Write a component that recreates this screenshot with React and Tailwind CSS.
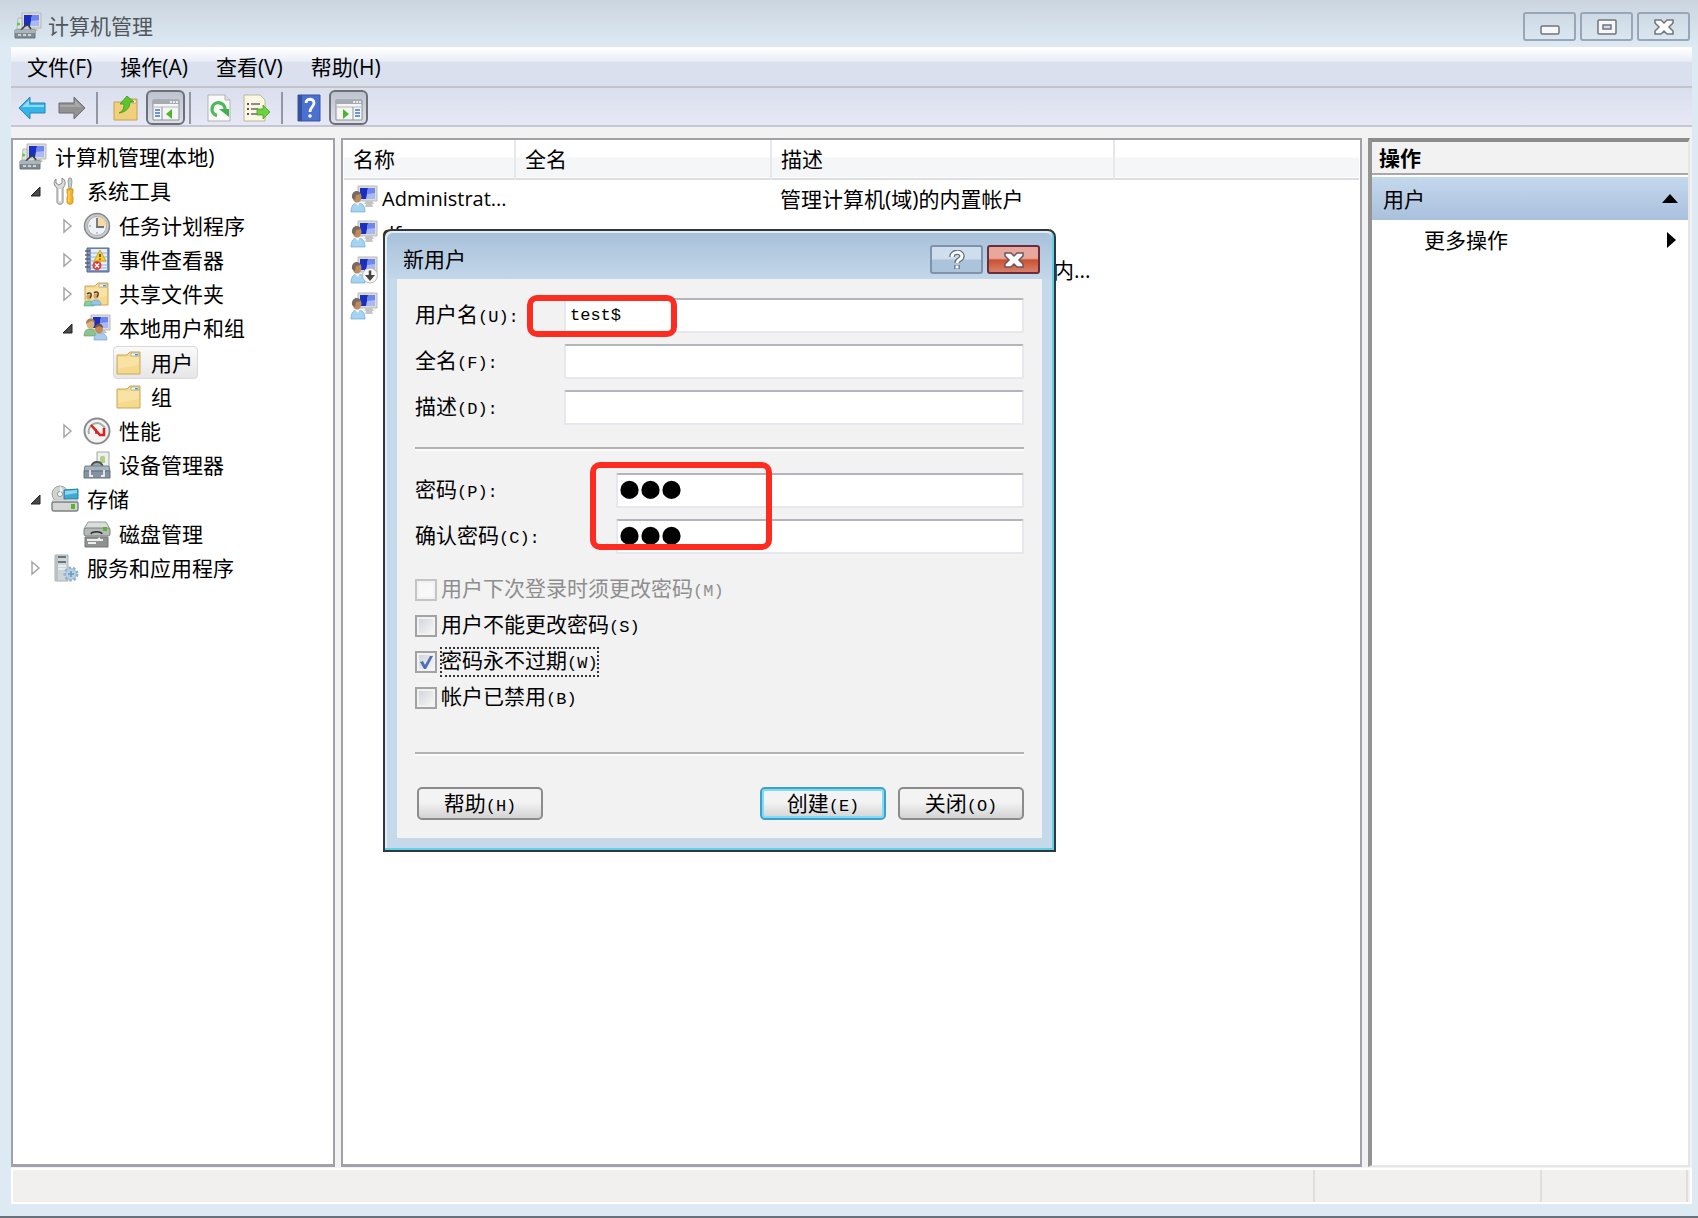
import { useState } from "react";

const MENUS = ["文件(F)", "操作(A)", "查看(V)", "帮助(H)"];

const TREE = [
  { id: "root", level: 0, label: "计算机管理(本地)", Icon: ComputerIcon },
  { id: "system", level: 1, label: "系统工具", Icon: ToolsIcon, state: "open" },
  { id: "tasks", level: 2, label: "任务计划程序", Icon: ClockIcon, state: "closed" },
  { id: "events", level: 2, label: "事件查看器", Icon: EventIcon, state: "closed" },
  { id: "shares", level: 2, label: "共享文件夹", Icon: SharedIcon, state: "closed" },
  { id: "local", level: 2, label: "本地用户和组", Icon: GroupIcon, state: "open" },
  { id: "users", level: 3, label: "用户", Icon: FolderIcon },
  { id: "groups", level: 3, label: "组", Icon: FolderIcon },
  { id: "perf", level: 2, label: "性能", Icon: PerfIcon, state: "closed" },
  { id: "devices", level: 2, label: "设备管理器", Icon: DeviceIcon },
  { id: "storage", level: 1, label: "存储", Icon: StorageIcon, state: "open" },
  { id: "disks", level: 2, label: "磁盘管理", Icon: DiskIcon },
  { id: "services", level: 1, label: "服务和应用程序", Icon: ServicesIcon, state: "closed" },
];

const INDENT = ["pl-1", "pl-4", "pl-12", "pl-20"];

const USERS = [
  { name: "Administrat...", desc: "管理计算机(域)的内置帐户" },
  { name: "df", desc: "" },
  { name: "Guest", desc: "供来宾访问计算机或访问域的内...", disabled: true },
  { name: "", desc: "" },
];

const OPTIONS = [
  { id: "mustChange", label: "用户下次登录时须更改密码", hotkey: "(M)", disabled: true },
  { id: "cannotChange", label: "用户不能更改密码", hotkey: "(S)" },
  { id: "neverExpires", label: "密码永不过期", hotkey: "(W)", focused: true },
  { id: "accountDisabled", label: "帐户已禁用", hotkey: "(B)" },
];

/* ---------- icons ---------- */

function Monitor() {
  return (
    <>
      <path d="M8 1h19v15H8z" fill="#dcdcd8" stroke="#b9b9b5" />
      <path d="M10 3h15v11H10z" fill="#a9b9f8" />
      <path d="M10 3h8l-2 11h-6z" fill="#1a2fc0" />
      <path d="M18 3h7v5l-8 1z" fill="#6f85ef" />
      <path d="M16 16h6l2 3h-10z" fill="#c3c4c2" />
    </>
  );
}

function ComputerIcon() {
  return (
    <svg viewBox="0 0 28 28" className="size-7 shrink-0">
      <Monitor />
      <path d="M4 6h4v11H3z" fill="#dfe3e3" stroke="#a8adad" strokeWidth=".8" />
      <circle cx="4.500" cy="12" r="1.600" fill="#55d03a" />
      <path d="M7 18l4-4 3-1 3 4" fill="none" stroke="#3a4043" strokeWidth="1.600" />
      <path d="M1 18h20v8H1z" fill="#7f8b91" stroke="#6a757b" />
      <path d="M1 18h20v3H1z" fill="#aab5ba" />
      <path d="M4 23h3M9 23h3M14 23h3" stroke="#e6ecef" strokeWidth="1.600" />
    </svg>
  );
}

function ToolsIcon() {
  return (
    <svg viewBox="0 0 28 28" className="size-7 shrink-0">
      <path d="M5 2v4l3 2 3-2V1c4 2 4 7 1 10v14c0 3-6 3-6 0V11C3 9 2 5 5 2z" fill="#dadada" stroke="#8a8a8a" />
      <path d="M9 12v12" stroke="#fff" strokeWidth="2" />
      <path d="M18 1h2l1 3-1 8h-2l-1-8z" fill="#c9cdd0" stroke="#8a8e91" strokeWidth=".8" />
      <path d="M16 12h6v4l-1 2 1 2v5c0 3-6 3-6 0v-5l1-2-1-2z" fill="#f6b41f" stroke="#c98a10" strokeWidth=".8" />
      <path d="M18 14v11" stroke="#ffe08a" />
    </svg>
  );
}

function ClockIcon() {
  return (
    <svg viewBox="0 0 28 28" className="size-7 shrink-0">
      <circle cx="14" cy="14" r="12.500" fill="#c9cccd" stroke="#85898b" strokeWidth="1.500" />
      <circle cx="14" cy="14" r="9.500" fill="#eef2f6" stroke="#a7abad" />
      <path d="M14 14V4.500A9.500 9.500 0 0 1 23.500 14z" fill="#f7d9a4" />
      <path d="M14 6v9h7" fill="none" stroke="#6f7375" strokeWidth="1.800" />
      <path d="M6 14h2M14 20v2" stroke="#8f9395" />
    </svg>
  );
}

function EventIcon() {
  return (
    <svg viewBox="0 0 28 28" className="size-7 shrink-0">
      <path d="M4 2h22v24H4z" fill="#7e94bd" stroke="#55688f" />
      <path d="M8 3h16v21H8z" fill="#e7eefb" />
      <path d="M8 7h16M8 11h16M8 15h16M8 19h16M8 22h16" stroke="#9db0d6" />
      <path d="M2 5h5M2 9h5M2 13h5M2 17h5M2 21h5" stroke="#5c6470" strokeWidth="1.500" />
      <path d="M17 4l6 11H11z" fill="#f7cf2a" stroke="#c79a12" strokeWidth=".8" />
      <path d="M17 8v3M17 12.500v1.200" stroke="#4c3a00" strokeWidth="1.600" />
      <circle cx="14" cy="19.500" r="4.500" fill="#dc4038" />
      <path d="M12 17.500l4 4M16 17.500l-4 4" stroke="#fff" strokeWidth="1.600" />
    </svg>
  );
}

function FolderShape() {
  return (
    <>
      <path d="M2 6h10l3-3h10v22H2z" fill="#f5d98c" stroke="#c9a75a" />
      <path d="M16 4h8v3h-8z" fill="#f4f8f6" stroke="#a9a88a" strokeWidth=".8" />
      <path d="M20 5h3v1.500h-3z" fill="#4d9bd0" />
      <path d="M3 8h21v8L3 20z" fill="#fbe7ae" opacity=".7" />
    </>
  );
}

function FolderIcon() {
  return (
    <svg viewBox="0 0 28 28" className="size-7 shrink-0">
      <FolderShape />
    </svg>
  );
}

function SharedIcon() {
  return (
    <svg viewBox="0 0 28 28" className="size-7 shrink-0">
      <FolderShape />
      <path d="M1 26c0-4 3-5 5-5s5 1 5 5z" fill="#7fd0a8" stroke="#4fa37c" strokeWidth=".6" />
      <path d="M8 25c0-4 3-5 5-5s5 1 5 5z" fill="#8fc8ec" stroke="#5b97c2" strokeWidth=".6" />
      <circle cx="6" cy="17" r="2.600" fill="#d3a271" />
      <circle cx="13" cy="16" r="2.600" fill="#d3a271" />
      <path d="M4 14c2-2 5-1 4 2l-1 2M11 13c2-2 5-1 4 2l-1 2" fill="none" stroke="#4a3b2c" strokeWidth="1.400" />
    </svg>
  );
}

function GroupIcon() {
  return (
    <svg viewBox="0 0 28 28" className="size-7 shrink-0">
      <Monitor />
      <path d="M1 22c0-6 3-7 6-7s6 1 6 7z" fill="#8cc48c" stroke="#5f9a63" strokeWidth=".6" />
      <ellipse cx="7.500" cy="10" rx="4" ry="5" fill="#dcb27e" />
      <path d="M3 10c0-7 8-7 9-2l-4-1z" fill="#a5835a" />
      <path d="M11 26c0-6 3-7 6-7s7 1 7 7z" fill="#a9cbee" stroke="#6f97c4" strokeWidth=".6" />
      <ellipse cx="16" cy="15" rx="4" ry="4.500" fill="#c48a58" />
      <path d="M12 14c0-6 8-6 8 0l-4-2z" fill="#7a5638" />
    </svg>
  );
}

function UserIcon({ disabled }) {
  return (
    <svg viewBox="0 0 28 28" className="size-7 shrink-0">
      <Monitor />
      <path d="M16 19h6l1 3h-8z" fill="#c4c5c4" />
      <path d="M1 27c0-7 3-9 7-9s7 2 7 9z" fill="#a5d3f2" stroke="#6ea6cf" strokeWidth=".7" />
      <path d="M5 18l3 3 2-4z" fill="#f2f7fb" />
      <ellipse cx="7" cy="12" rx="4.500" ry="5.500" fill="#c08a5d" />
      <path d="M2 13C1 5 9 4 11 9l-5 1-1 5z" fill="#776a5e" />
      {disabled && (
        <>
          <circle cx="20" cy="19.500" r="7.500" fill="#f7f7f7" stroke="#b5b5b5" />
          <path d="M20 14.500v6" stroke="#444" strokeWidth="2.500" />
          <path d="M15 19h10l-5 6z" fill="#444" />
        </>
      )}
    </svg>
  );
}

function PerfIcon() {
  return (
    <svg viewBox="0 0 28 28" className="size-7 shrink-0">
      <circle cx="14" cy="14" r="12.500" fill="#f4f4f4" stroke="#8b8b8b" strokeWidth="2" />
      <path d="M6 17a8 8 0 0 1 16-5" fill="none" stroke="#9fb3aa" strokeWidth="2" />
      <path d="M8 8l9 10h4v-7" fill="none" stroke="#e01f1f" strokeWidth="2.600" />
      <path d="M13 17v-5" stroke="#e01f1f" strokeWidth="1.600" />
    </svg>
  );
}

function DeviceIcon() {
  return (
    <svg viewBox="0 0 28 28" className="size-7 shrink-0">
      <path d="M14 1h12v16H14z" fill="#eef0ec" stroke="#a3a6a3" />
      <path d="M17 12V7c0-3 5-3 5 0v5z" fill="#b3cf86" />
      <path d="M8 16c1-4 3-5 6-5s5 1 6 5" fill="#9aa7b2" stroke="#4c5356" strokeWidth="1.800" />
      <path d="M2 15h24l1 5H1z" fill="#a7b4bf" stroke="#75828d" />
      <path d="M1 20h26v7H1z" fill="#8393a1" stroke="#66737e" />
      <path d="M7 19v6h3M21 19v6h-3" fill="none" stroke="#e7edf1" strokeWidth="1.800" />
    </svg>
  );
}

function StorageIcon() {
  return (
    <svg viewBox="0 0 28 28" className="size-7 shrink-0">
      <circle cx="9" cy="9" r="8" fill="#cfd4d3" stroke="#9da2a1" />
      <circle cx="9" cy="9" r="2.500" fill="#fff" stroke="#8d9291" />
      <path d="M9 1l3 5-3 1z" fill="#f2f4f4" />
      <path d="M13 5l14-1v10H13z" fill="#3fa9d3" stroke="#2580a8" />
      <path d="M14 6l12-1v3l-12 2z" fill="#8fd6ee" />
      <path d="M2 15h24l1 3H1z" fill="#f4f5f5" stroke="#b5b8b7" strokeWidth=".8" />
      <rect x="1" y="17" width="26" height="9" rx="2" fill="#d3d6d5" stroke="#7d8180" strokeWidth="1.400" />
      <path d="M20 19h4v5h-4z" fill="#54b82a" />
    </svg>
  );
}

function DiskIcon() {
  return (
    <svg viewBox="0 0 28 28" className="size-7 shrink-0">
      <path d="M5 2h18l4 7H1z" fill="#dcdedd" stroke="#979a99" />
      <rect x="1" y="8" width="26" height="8" rx="2" fill="#b5b9b8" stroke="#7d8180" />
      <path d="M8 14c1-3 10-3 11 0" fill="none" stroke="#26303a" strokeWidth="1.600" />
      <path d="M20 7h4v4h-4z" fill="#54b82a" />
      <path d="M2 17h23v10H2z" fill="#8e9190" stroke="#737675" />
      <path d="M5 23h8M15 19l2-1M4 20h16" stroke="#eceeed" strokeWidth="1.800" />
    </svg>
  );
}

function ServicesIcon() {
  return (
    <svg viewBox="0 0 28 28" className="size-7 shrink-0">
      <path d="M4 1h13v26H4z" fill="#cdd5d8" stroke="#a5afb4" />
      <path d="M4 1h3v26H4z" fill="#b7c2c7" />
      <path d="M7 3h8M7 8h8" stroke="#4d565b" strokeWidth="1.600" />
      <path d="M7 12h8M7 15h8" stroke="#eef3f5" strokeWidth="1.500" />
      <circle cx="20" cy="20" r="6" fill="#a8c4dc" stroke="#94b2cc" strokeWidth="3" strokeDasharray="2.500 1.700" />
      <circle cx="20" cy="20" r="5" fill="#b6cfe3" />
      <path d="M20 17v6M17 20h6" stroke="#7396b6" strokeWidth="1.500" />
    </svg>
  );
}

function ArrowIcon({ forward }) {
  return (
    <svg viewBox="0 0 28 24" className="h-6 w-7">
      {forward ? (
        <>
          <path d="M27 12L16 1v6H1v10h15v6z" fill="#929292" stroke="#6c6c6c" />
          <path d="M2 9h15V4l7 7H2z" fill="#a8a8a8" />
        </>
      ) : (
        <>
          <path d="M1 12L12 1v6h15v10H12v6z" fill="#35b4ea" stroke="#2a83b5" />
          <path d="M4 11l7-7v5h15v2z" fill="#8fdcfa" />
        </>
      )}
    </svg>
  );
}

function FolderUpIcon() {
  return (
    <svg viewBox="0 0 28 28" className="size-7">
      <path d="M2 8h9l2-3h12v21H2z" fill="#f1d07c" stroke="#c8a24d" />
      <path d="M20 6h4v3h-4z" fill="#fff" stroke="#b59c5c" strokeWidth=".7" />
      <path d="M7 19c4-2 5-5 5-9H8l7-8 7 6h-4c0 6-4 10-11 11z" fill="#5fc52e" stroke="#3c941a" strokeWidth=".8" />
    </svg>
  );
}

function PaneIcon({ right }) {
  return (
    <svg viewBox="0 0 28 22" className="mt-1 h-[22px] w-7">
      <path d="M1 1h26v20H1z" fill="#f5f5f5" stroke="#8d9299" />
      <path d="M1 1h26v4H1z" fill="#a6abb3" />
      <path d="M18 3h2M21 3h2M24 3h2" stroke="#fff" strokeWidth="1.500" />
      <path d="M2 8h24" stroke="#b4b9c0" />
      {right ? (
        <>
          <path d="M18 8v13" stroke="#8d9299" />
          <path d="M20 11h5M20 14h5M20 17h5" stroke="#3c78c4" strokeWidth="1.600" />
          <path d="M8 10l6 5-6 5z" fill="#4fb52c" />
        </>
      ) : (
        <>
          <path d="M10 8v13" stroke="#8d9299" />
          <path d="M3 11h5M3 14h5M3 17h5" stroke="#3c78c4" strokeWidth="1.600" />
          <path d="M20 10l-6 5 6 5z" fill="#4fb52c" />
        </>
      )}
    </svg>
  );
}

function RefreshIcon() {
  return (
    <svg viewBox="0 0 24 28" className="h-7 w-6">
      <path d="M1 1h17l5 5v21H1z" fill="#fafafa" stroke="#b3b3b3" />
      <path d="M18 1v5h5" fill="#e2e2e2" stroke="#b3b3b3" />
      <path d="M10 21.500A6.500 6.500 0 1 1 18 15" fill="none" stroke="#4fb85c" strokeWidth="3.400" />
      <path d="M12 15h10v8z" fill="#3fb04e" />
    </svg>
  );
}

function ExportIcon() {
  return (
    <svg viewBox="0 0 28 28" className="size-7">
      <path d="M1 1h16l5 5v21H1z" fill="#fbf7e3" stroke="#bdb79c" />
      <path d="M4 10h2M4 15h2M4 20h2" stroke="#555" strokeWidth="2" />
      <path d="M8 10h9M8 15h7M8 20h7" stroke="#8d8d8d" strokeWidth="2" />
      <path d="M14 15h6v-4l7 7-7 7v-4h-6z" fill="#6fd13f" stroke="#44a01d" strokeWidth=".8" />
    </svg>
  );
}

function HelpIcon() {
  return (
    <svg viewBox="0 0 24 28" className="h-7 w-6">
      <path d="M1 1h22v26H1z" fill="#4a70d0" stroke="#3a539f" />
      <path d="M1 1h4v26H1z" fill="#35529f" />
      <path d="M9 9c0-5 8-5 8 0 0 4-4 4-4 9" fill="none" stroke="#fff" strokeWidth="2.800" />
      <circle cx="13" cy="22" r="1.800" fill="#fff" />
    </svg>
  );
}

function CloseGlyph({ stroke }) {
  return (
    <svg viewBox="0 0 20 16" className="h-4 w-5">
      <path d="M1 1h6l3 3 3-3h6v3l-4 4 4 4v3h-6l-3-3-3 3H1v-3l4-4-4-4z" fill="#fbfbfb" stroke={stroke} strokeWidth="1.500" />
    </svg>
  );
}

/* ---------- window parts ---------- */

function CaptionButton({ label, children }) {
  return (
    <button
      aria-label={label}
      className="flex h-[29px] w-[53px] items-center justify-center rounded-[3px] border-2 border-[#9aa5b8] bg-linear-to-b from-[#cdd9e4] to-[#dae6f0]"
    >
      {children}
    </button>
  );
}

function TitleBar() {
  return (
    <header className="flex h-[47px] items-center bg-linear-to-b from-[#cad5df] to-[#dde9f3] pt-1 pr-2 pl-3.5">
      <ComputerIcon />
      <h1 className="ml-1.5 flex-1 text-[#50565c]">计算机管理</h1>
      <div className="mt-0.5 flex gap-1">
        <CaptionButton label="最小化">
          <svg viewBox="0 0 20 16" className="h-4 w-5">
            <rect x="1" y="7" width="18" height="8" rx="1.500" fill="#f7f7f7" stroke="#70757e" strokeWidth="1.500" />
          </svg>
        </CaptionButton>
        <CaptionButton label="还原">
          <svg viewBox="0 0 20 16" className="h-4 w-5">
            <rect x="1" y="1" width="18" height="14" rx="1" fill="#f7f7f7" stroke="#70757e" strokeWidth="1.500" />
            <rect x="6" y="6" width="8" height="4" fill="#d4dee8" stroke="#70757e" strokeWidth="1.500" />
          </svg>
        </CaptionButton>
        <CaptionButton label="关闭">
          <CloseGlyph stroke="#70757e" />
        </CaptionButton>
      </div>
    </header>
  );
}

function ToolButton({ label, children }) {
  return (
    <button aria-label={label} className="flex h-full items-center">
      {children}
    </button>
  );
}

function ToggleButton({ label, children }) {
  return (
    <button
      aria-label={label}
      aria-pressed="true"
      className="flex h-[35px] w-[39px] items-center justify-center rounded-md border-2 border-[#6d7079] bg-linear-to-b from-[#bfc3ce] to-[#dcdfe8]"
    >
      {children}
    </button>
  );
}

function Divider() {
  return <span className="h-8 w-0.5 bg-[#9496a0]" />;
}

function Toolbar() {
  return (
    <div className="flex h-[39px] items-center border-b-2 border-[#c5c6d3] bg-linear-to-b from-[#dadfed] to-[#e7e8f5] pt-0.5 pl-[7px]">
      <div className="flex items-center gap-3">
        <ToolButton label="后退"><ArrowIcon /></ToolButton>
        <ToolButton label="前进"><ArrowIcon forward /></ToolButton>
      </div>
      <div className="ml-2.5 flex items-center">
        <Divider />
        <div className="ml-3.5 flex items-center gap-1.5">
          <ToolButton label="向上一级"><FolderUpIcon /></ToolButton>
          <ToggleButton label="显示/隐藏控制台树"><PaneIcon /></ToggleButton>
        </div>
      </div>
      <div className="ml-1 flex items-center">
        <Divider />
        <div className="ml-4 flex items-center gap-3">
          <ToolButton label="刷新"><RefreshIcon /></ToolButton>
          <ToolButton label="导出列表"><ExportIcon /></ToolButton>
        </div>
      </div>
      <div className="ml-2.5 flex items-center">
        <Divider />
        <div className="ml-3.5 flex items-center gap-2">
          <ToolButton label="帮助"><HelpIcon /></ToolButton>
          <ToggleButton label="显示/隐藏操作窗格"><PaneIcon right /></ToggleButton>
        </div>
      </div>
    </div>
  );
}

function TreeArrow({ state }) {
  if (state === "open") {
    return (
      <svg viewBox="0 0 12 12" className="size-3">
        <path d="M11 2v9H2z" fill="#4a4a4a" stroke="#222" />
      </svg>
    );
  }
  return (
    <svg viewBox="0 0 12 16" className="h-4 w-3">
      <path d="M3 2l7 6-7 6z" fill="#fff" stroke="#a6a6a6" strokeWidth="1.500" />
    </svg>
  );
}

function Tree() {
  const [selected, setSelected] = useState("users");

  return (
    <nav className="w-[324px] shrink-0 border-2 border-b-[3px] border-[#a0a1a9] bg-white">
      <ul className="flex h-[445px] flex-col">
        {TREE.map(({ id, level, label, Icon, state }) => (
          <li key={id} className={`flex flex-1 items-center ${INDENT[level]}`}>
            {level > 0 && <span className="w-5 shrink-0">{state && <TreeArrow state={state} />}</span>}
            <button
              onClick={() => setSelected(id)}
              className={`flex h-[33px] items-center gap-2 rounded border pr-1 pl-px whitespace-nowrap ${
                selected === id ? "border-[#d9d9d9] bg-linear-to-b from-[#fafafa] to-[#e6e6e6]" : "border-transparent"
              }`}
            >
              <Icon />
              {label}
            </button>
          </li>
        ))}
      </ul>
    </nav>
  );
}

function UserList() {
  return (
    <main className="min-w-0 flex-1 border-2 border-b-[3px] border-[#a0a1a9] bg-white px-px">
      <table className="w-full table-fixed border-collapse text-left whitespace-nowrap">
        <colgroup>
          <col className="w-[171px]" />
          <col className="w-[256px]" />
          <col className="w-[343px]" />
          <col />
        </colgroup>
        <thead>
          <tr className="h-[39px] border-b-2 border-[#dcdde0] bg-linear-to-b from-white from-45% to-[#f5f6f8] to-50%">
            <th className="border-r-2 border-[#e6e7ea] pl-[9px] font-normal">名称</th>
            <th className="border-r-2 border-[#e6e7ea] pl-[9px] font-normal">全名</th>
            <th className="border-r-2 border-[#e6e7ea] pl-[9px] font-normal">描述</th>
            <th />
          </tr>
        </thead>
        <tbody>
          {USERS.map((u, i) => (
            <tr key={i} className="h-9">
              <td className="pt-0.5 pl-1.5">
                <div className="flex items-center gap-1">
                  <UserIcon disabled={u.disabled} />
                  <span className="text-xl">{u.name}</span>
                </div>
              </td>
              <td />
              <td className="pt-0.5 pl-[9px]">{u.desc}</td>
              <td />
            </tr>
          ))}
        </tbody>
      </table>
    </main>
  );
}

function ActionsPane() {
  return (
    <aside className="w-[322px] shrink-0 border-t-4 border-r-2 border-b-2 border-l-4 border-t-[#8b8b8b] border-r-[#e6e6e6] border-b-[#e6e6e6] border-l-[#939393] bg-white">
      <h2 className="flex h-[33px] items-center border-b-2 border-[#a8a8a8] bg-[#f2f2f2] pl-[7px] font-bold">操作</h2>
      <button className="mt-0.5 flex h-[43px] w-full items-center justify-between bg-linear-to-b from-[#c5d9ed] to-[#a9c0dc] pr-2.5 pl-[11px]">
        用户
        <svg viewBox="0 0 16 9" className="h-[9px] w-4"><path d="M8 0l8 9H0z" /></svg>
      </button>
      <button className="flex h-[39px] w-full items-center justify-between pr-3 pl-[52px]">
        更多操作
        <svg viewBox="0 0 9 16" className="h-4 w-[9px]"><path d="M0 0l9 8-9 8z" /></svg>
      </button>
    </aside>
  );
}

/* ---------- new user dialog ---------- */

function Hotkey({ children }) {
  return <span className="font-['Liberation_Mono'] text-[17px]">{children}</span>;
}

function Field({ id, label, hotkey, wide, ...props }) {
  return (
    <div className="flex h-[35px] items-center">
      <label htmlFor={id} className={`shrink-0 ${wide ? "w-[149px]" : "w-[201px]"}`}>
        {label}
        <Hotkey>{hotkey}:</Hotkey>
      </label>
      <input
        id={id}
        className={`h-full min-w-0 flex-1 rounded-xs border-2 border-[#e6e8ee] border-t-[#b4b5bb] bg-white outline-none ${
          props.type === "password"
            ? "pl-px font-['Liberation_Serif'] text-6xl [-webkit-text-stroke:4px_black]"
            : "pl-1 font-['Liberation_Mono'] text-[17px]"
        }`}
        {...props}
      />
    </div>
  );
}

function Rule() {
  return <hr className="h-0.5 border-0 bg-[#b3b3b3] shadow-[0_2px_0_#fbfbfb]" />;
}

function DialogButton({ primary, children }) {
  return (
    <button
      className={`h-[33px] w-[126px] rounded-[5px] border-2 bg-linear-to-b from-[#f3f3f3] from-45% to-[#d6d6d6] to-95% leading-none ${
        primary ? "border-[#3f9fcb] shadow-[inset_0_0_0_2px_#7fdcf5]" : "border-[#8c8c8c]"
      }`}
    >
      {children}
    </button>
  );
}

function NewUserDialog() {
  const [form, setForm] = useState({ username: "test$", fullname: "", desc: "", pass: "123", confirm: "123" });
  const [flags, setFlags] = useState({ neverExpires: true });

  const bind = (name) => ({
    id: name,
    value: form[name],
    onChange: (e) => setForm({ ...form, [name]: e.target.value }),
  });

  return (
    <section
      role="dialog"
      aria-labelledby="dialog-title"
      className="absolute top-[229px] left-[383px] w-[673px] rounded-t-lg border-2 border-[#30383d] bg-[#c5d9eb] px-3 pb-3 shadow-[inset_-2px_-2px_0_#5fd0e6,inset_2px_2px_0_#e3edf5]"
    >
      <div className="-mx-2.5 mt-0.5 flex h-[46px] justify-between rounded-t-md bg-linear-to-b from-[#a8c1d9] to-[#c3d7ea] pr-3 pl-4">
        <h2 id="dialog-title" className="flex items-center pt-1.5">新用户</h2>
        <div className="flex gap-1 pt-3">
          <button aria-label="帮助" className="flex h-[29px] w-[53px] items-center justify-center rounded-[3px] border-2 border-[#7f93ad] bg-linear-to-b from-[#cfdeec] from-48% to-[#abc4dc] to-52%">
            <svg viewBox="0 0 16 20" className="h-5 w-4">
              <path d="M3 7c0-6 10-6 10-1 0 4-5 3-5 7M8 15v4" fill="none" stroke="#62718a" strokeWidth="5.500" />
              <path d="M3 7c0-6 10-6 10-1 0 4-5 3-5 7M8 15.500v3" fill="none" stroke="#fff" strokeWidth="3" />
            </svg>
          </button>
          <button aria-label="关闭" className="flex h-[29px] w-[53px] items-center justify-center rounded-[3px] border-2 border-[#6b2c3c] bg-linear-to-b from-[#e8a79c] from-45% via-[#c9512f] via-52% to-[#d9806a]">
            <CloseGlyph stroke="#6d5560" />
          </button>
        </div>
      </div>

      <form onSubmit={(e) => e.preventDefault()} className="relative bg-[#f2f2f2] px-[18px] pt-[19px] pb-[18px]">
        <div className="flex flex-col gap-[11px]">
          <Field {...bind("username")} label="用户名" hotkey="(U)" wide />
          <Field {...bind("fullname")} label="全名" hotkey="(F)" wide />
          <Field {...bind("desc")} label="描述" hotkey="(D)" wide />
        </div>
        <div className="mt-[22px]"><Rule /></div>

        <div className="mt-6 flex flex-col gap-[11px]">
          <Field {...bind("pass")} type="password" label="密码" hotkey="(P)" />
          <Field {...bind("confirm")} type="password" label="确认密码" hotkey="(C)" />
        </div>

        <div className="mt-[18px]">
          {OPTIONS.map((o) => (
            <label key={o.id} className={`flex h-9 items-center gap-1 ${o.disabled ? "text-[#8e8e8e]" : ""}`}>
              <span className="grid">
                <input
                  type="checkbox"
                  disabled={o.disabled}
                  checked={!!flags[o.id]}
                  onChange={(e) => setFlags({ ...flags, [o.id]: e.target.checked })}
                  className="peer col-start-1 row-start-1 size-[22px] appearance-none border-2 border-[#a3a3a3] bg-linear-to-br from-[#cdd1d7] to-[#fafafa] shadow-[inset_0_0_0_2px_#f2f2f2] disabled:border-[#c4c4c4] disabled:from-[#f6f6f6]"
                />
                <svg viewBox="0 0 22 22" className="pointer-events-none invisible col-start-1 row-start-1 size-[22px] peer-checked:visible">
                  <path d="M5 11l3-1 2 4 5-9h3l-7 13H9z" fill="#4e6db4" />
                </svg>
              </span>
              <span className={`leading-6 ${o.focused ? "outline-2 -outline-offset-1 outline-dotted outline-[#333]" : ""}`}>
                {o.label}
                <Hotkey>{o.hotkey}</Hotkey>
              </span>
            </label>
          ))}
        </div>
        <div className="mt-9"><Rule /></div>

        <div className="mt-[33px] flex gap-3 pl-0.5">
          <DialogButton>帮助<Hotkey>(H)</Hotkey></DialogButton>
          <span className="flex-1" />
          <DialogButton primary>创建<Hotkey>(E)</Hotkey></DialogButton>
          <DialogButton>关闭<Hotkey>(O)</Hotkey></DialogButton>
        </div>

        {/* callouts */}
        <span className="pointer-events-none absolute top-4 left-[130px] h-[42px] w-[150px] rounded-[10px] border-6 border-[#fc2d20]" />
        <span className="pointer-events-none absolute top-[183px] left-[193px] h-[88px] w-[182px] rounded-[10px] border-6 border-[#fc2d20]" />
      </form>
    </section>
  );
}

function App() {
  return (
    <div className="relative flex min-h-screen flex-col border-b-2 border-[#6b717b] bg-[#dde9f3] font-['Open_Sans','Noto_Sans_CJK_SC',sans-serif] text-[21px] leading-7 text-black">
      <TitleBar />

      <div className="mr-1.5 mb-3 ml-[11px] flex flex-1 flex-col bg-[#f2f2f2]">
        <div className="flex h-[41px] items-center gap-7 border-b-2 border-[#c3c3c9] bg-linear-to-b from-white from-5% via-[#e9edf6] via-36% to-[#dae0ee] to-40% pl-4">
          {MENUS.map((m) => (
            <button key={m}>{m}</button>
          ))}
        </div>
        <Toolbar />

        <div className="mt-[11px] mr-0.5 flex flex-1 gap-1.5">
          <Tree />
          <UserList />
          <ActionsPane />
        </div>

        <footer className="mt-px flex h-9 border-2 border-white bg-[#f1f0ef] pr-0.5">
          <span className="flex-1 border-r-2 border-[#dfdddd]" />
          <span className="w-[227px] border-r-2 border-[#dfdddd]" />
          <span className="w-[146px] border-r-2 border-[#dfdddd]" />
        </footer>
      </div>

      <NewUserDialog />
    </div>
  );
}

export default App;
